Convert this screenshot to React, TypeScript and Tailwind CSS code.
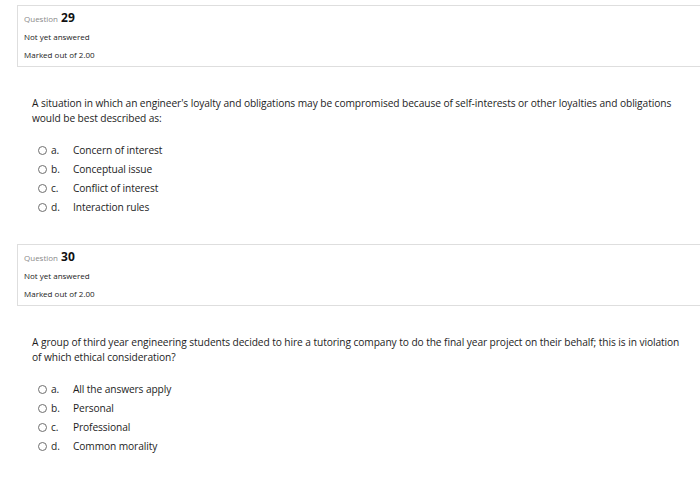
const questions = [
  {
    number: 29,
    text: "A situation in which an engineer's loyalty and obligations may be compromised because of self-interests or other loyalties and obligations would be best described as:",
    options: ['Concern of interest', 'Conceptual issue', 'Conflict of interest', 'Interaction rules'],
  },
  {
    number: 30,
    text: 'A group of third year engineering students decided to hire a tutoring company to do the final year project on their behalf; this is in violation of which ethical consideration?',
    options: ['All the answers apply', 'Personal', 'Professional', 'Common morality'],
  },
];

const letters = ['a.', 'b.', 'c.', 'd.'];

function Question({ number, text, options }: { number: number; text: string; options: string[] }) {
  return (
    <div className="pb-[30px]">
      <div className="ml-[17px] w-[700px] h-[62px] border border-[#dedede] bg-white pl-[6px] pt-[3px]">
        <div className="flex items-baseline gap-[3px] leading-[18px]">
          <span className="text-[8px] text-[#8a8a8a]">Question</span>
          <span className="text-[12px] font-bold text-[#111]">{number}</span>
        </div>
        <div className="text-[8px] leading-[18px] text-[#222]">Not yet answered</div>
        <div className="text-[8px] leading-[18px] text-[#222]">Marked out of 2.00</div>
      </div>
      <p className="mt-[29px] ml-[32px] mr-[14px] text-[10.2px] tracking-[-0.08px] leading-[15px] text-[#1d1d1d]">{text}</p>
      <ul className="mt-[17px] ml-[38px] flex flex-col gap-[4px]">
        {options.map((opt, i) => (
          <li key={opt} className="flex items-center h-[15px] text-[10.2px] tracking-[-0.1px] text-[#1d1d1d]">
            <span className="w-[9px] h-[9px] rounded-full border border-[#6f6f6f] bg-white" />
            <span className="ml-[4px] w-[22px]">{letters[i]}</span>
            <span>{opt}</span>
          </li>
        ))}
      </ul>
    </div>
  );
}

export default function App() {
  return (
    <div className="w-[700px] h-[479px] overflow-hidden bg-white pt-[5px] font-['Open_Sans',sans-serif]">
      {questions.map((q, idx) => (
        <div key={q.number} className={idx === 0 ? '-mb-[1px]' : ''}>
          <Question {...q} />
        </div>
      ))}
    </div>
  );
}
